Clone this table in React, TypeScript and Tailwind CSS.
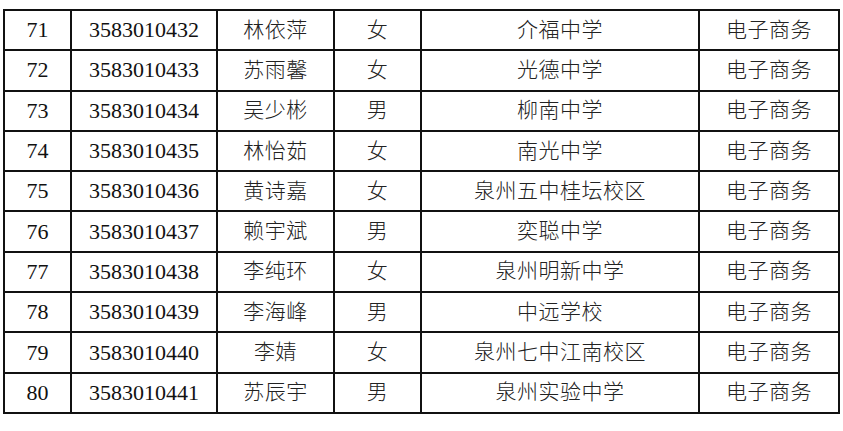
import React from "react";

const rows: [string, string, string, string, string, string][] = [
  ["71", "3583010432", "林依萍", "女", "介福中学", "电子商务"],
  ["72", "3583010433", "苏雨馨", "女", "光德中学", "电子商务"],
  ["73", "3583010434", "吴少彬", "男", "柳南中学", "电子商务"],
  ["74", "3583010435", "林怡茹", "女", "南光中学", "电子商务"],
  ["75", "3583010436", "黄诗嘉", "女", "泉州五中桂坛校区", "电子商务"],
  ["76", "3583010437", "赖宇斌", "男", "奕聪中学", "电子商务"],
  ["77", "3583010438", "李纯环", "女", "泉州明新中学", "电子商务"],
  ["78", "3583010439", "李海峰", "男", "中远学校", "电子商务"],
  ["79", "3583010440", "李婧", "女", "泉州七中江南校区", "电子商务"],
  ["80", "3583010441", "苏辰宇", "男", "泉州实验中学", "电子商务"],
];

export default function App() {
  return (
    <div className="w-[843px] h-[431px] bg-white pt-[9px] pl-[3px]">
      <table className="table-fixed border-collapse w-[835px] text-[21px] text-[#111] font-['Liberation_Serif','Noto_Sans_CJK_SC',serif]">
        <colgroup>
          <col className="w-[67px]" />
          <col className="w-[146px]" />
          <col className="w-[117px]" />
          <col className="w-[87px]" />
          <col className="w-[278px]" />
          <col className="w-[140px]" />
        </colgroup>
        <tbody>
          {rows.map((r) => (
            <tr key={r[0]} className="h-[40.3px]">
              {r.map((c, i) => (
                <td
                  key={i}
                  className={
                    i < 2
                      ? "border-2 border-[#111] text-center align-middle p-0 leading-none text-[22px]"
                      : "border-2 border-[#111] text-center align-middle p-0 leading-none font-light text-[#222] tracking-[0.5px]"
                  }
                >
                  {c}
                </td>
              ))}
            </tr>
          ))}
        </tbody>
      </table>
    </div>
  );
}
